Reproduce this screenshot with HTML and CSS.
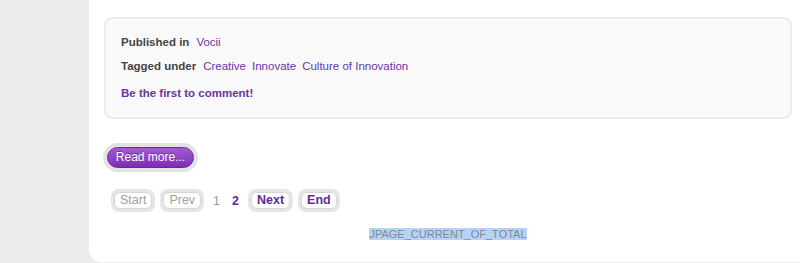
FILE: index.html
```html
<!DOCTYPE html>
<html lang="en">
<head>
  <meta charset="UTF-8" />
  <title>Article footer</title>
  <link rel="stylesheet" href="styles.css">
</head>
<body>
  <div class="sidebar"></div>

  <div class="content">
    <!-- article info -->
    <div class="item-info">
      <div class="info-row">
        <strong>Published in</strong>
        <a href="#">Vocii</a>
      </div>
      <div class="info-row">
        <strong>Tagged under</strong>
        <a href="#">Creative</a>
        <a href="#">Innovate</a>
        <a href="#">Culture of Innovation</a>
      </div>
      <div class="info-row comment">
        <a href="#">Be the first to comment!</a>
      </div>
    </div>

    <div class="readmore">
      <a href="#">Read more...</a>
    </div>

    <!-- pagination -->
    <ul class="pagination">
      <li class="btn disabled"><span>Start</span></li>
      <li class="btn disabled"><span>Prev</span></li>
      <li class="num">1</li>
      <li class="num current">2</li>
      <li class="btn"><a href="#">Next</a></li>
      <li class="btn"><a href="#">End</a></li>
    </ul>

    <p class="counter"><span>JPAGE_CURRENT_OF_TOTAL</span></p>
  </div>
</body>
</html>
```

FILE: styles.css
```css
* {
  margin: 0;
  padding: 0;
  box-sizing: border-box;
}

body {
  font-family: 'Liberation Sans', Arial, sans-serif;
  font-size: 12px;
  color: #444;
  background: #ececec;
  display: flex;
  height: 263px;
  overflow: hidden;
}

a {
  color: #6a34a6;
  text-decoration: none;
}

.sidebar {
  width: 89px;
  flex-shrink: 0;
}

.content {
  flex: 1;
  background: #fff;
  height: 262px;
  border-bottom-left-radius: 12px;
  padding: 17px 8px 0 15px;
}

.item-info {
  height: 102px;
  border: 2px solid #ececec;
  border-radius: 8px;
  background: #f9f9f9;
  padding: 11px 0 0 15px;
}

.info-row {
  display: flex;
  gap: 6px;
  line-height: 24px;
  font-size: 11.5px;
}

.info-row strong {
  color: #444;
  margin-right: 1px;
}

.info-row.comment {
  margin-top: 3px;
}

.info-row.comment a {
  font-weight: bold;
}

.readmore {
  display: inline-block;
  margin: 24px 0 0 -1px;
  padding: 4px;
  background: #e3e3e3;
  border-radius: 15px;
}

.readmore a {
  display: block;
  width: 87px;
  height: 21px;
  text-align: center;
  border-radius: 11px;
  color: #fff;
  font-size: 12px;
  background: linear-gradient(#a45bd6, #7c2eb4);
  border: 1px solid #6b2a9c;
  line-height: 19px;
  text-shadow: 0 -1px 0 rgba(0, 0, 0, 0.3);
}

.pagination {
  list-style: none;
  display: flex;
  align-items: center;
  gap: 5px;
  margin: 17px 0 0 7px;
  font-size: 12.5px;
}

.pagination .btn {
  padding: 3px;
  background: #e6e6e6;
  border-radius: 8px;
}

.pagination .btn span,
.pagination .btn a {
  display: block;
  height: 17px;
  line-height: 15px;
  padding: 0 5px;
  background: #fff;
  border: 1px solid #d6d6d6;
  border-radius: 6px;
}

.pagination .btn a {
  font-weight: bold;
  color: #5e2a96;
}

.pagination .disabled span {
  color: #a0a0a0;
}

.pagination .num {
  color: #999;
  padding: 0 4px;
}

.pagination .num.current {
  font-weight: bold;
  color: #5e2a96;
  padding: 0 4px 0 3px;
}

.counter {
  margin-top: 16px;
  text-align: center;
  font-size: 11px;
  line-height: 12px;
  color: #888;
}

.counter span {
  background: #b4d3f8;
}
```
